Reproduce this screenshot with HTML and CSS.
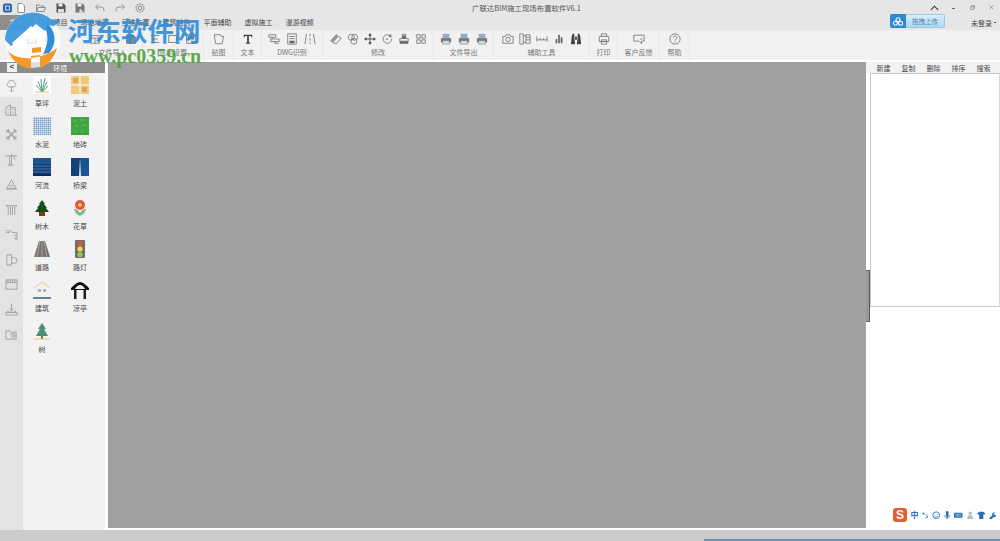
FILE: index.html
```html
<!DOCTYPE html>
<html lang="zh">
<head>
<meta charset="utf-8">
<title>广联达BIM施工现场布置软件V6.1</title>
<link rel="stylesheet" href="styles.css">
</head>
<body>
<div class="app">
  <header class="titlebar">
    <div class="toprow">
      <div class="quick">
        <svg class="q" viewBox="0 0 10 10"><rect x="0" y="0.5" width="9" height="9" rx="2" fill="#2b62a8"/><rect x="2.5" y="3" width="4" height="4" fill="none" stroke="#cfe0f5"/></svg>
        <svg class="q" viewBox="0 0 10 10"><path d="M2 .5h4l2.500 2.500v6.500h-6.500z" fill="#fff" stroke="#777" stroke-width=".8"/></svg>
        <svg class="q q-gap" viewBox="0 0 10 10"><path d="M.5 8.500v-6.500h3l1 1h3v1.500M.5 8.500l1.500-4h7.500l-1.500 4z" fill="none" stroke="#777" stroke-width=".8"/></svg>
        <svg class="q q-gap" viewBox="0 0 10 10"><path d="M.5.5h7l2 2v7h-9z" fill="#555"/><rect x="2.500" y=".5" width="4" height="3" fill="#eee"/><rect x="2" y="6" width="6" height="3.500" fill="#ddd"/></svg>
        <svg class="q q-gap" viewBox="0 0 10 10"><path d="M.5.5h7l2 2v7h-9z" fill="#777"/><rect x="2.500" y=".5" width="4" height="3" fill="#eee"/><path d="M4 9.500l1-4 4 4z" fill="#ddd"/></svg>
        <svg class="q q-gap" viewBox="0 0 10 10"><path d="M3.500 1l-3 3 3 3M1 4h5a3 3 0 0 1 3 3v1.500" fill="none" stroke="#999"/></svg>
        <svg class="q q-gap" viewBox="0 0 10 10"><path d="M6.500 1l3 3-3 3M9 4h-5a3 3 0 0 0-3 3v1.500" fill="none" stroke="#999"/></svg>
        <svg class="q q-gap" viewBox="0 0 10 10"><circle cx="5" cy="5" r="2" fill="none" stroke="#888"/><circle cx="5" cy="5" r="4" fill="none" stroke="#888" stroke-dasharray="1.600 .9" stroke-width="1.200"/></svg>
      </div>
      <div class="apptitle">广联达BIM施工现场布置软件V6.1</div>
      <div class="winctl">
        <svg class="caret" viewBox="0 0 10 6"><path d="M1 5l4-4 4 4" fill="none" stroke="#333" stroke-width="1.200"/></svg>
        <span class="min"></span>
        <svg class="res" viewBox="0 0 6 6"><path d="M.5 2h3.500v3.500h-3.500zM2 2v-1.500h3.500v3.500h-1.500" fill="none" stroke="#777" stroke-width=".7"/></svg>
        <svg class="cls" viewBox="0 0 6 6"><path d="M.8.8l4.400 4.400M5.200.8l-4.400 4.400" stroke="#777" stroke-width=".8"/></svg>
      </div>
    </div>
    <div class="tabrow">
      <span class="tab tab-file">文件</span>
      <nav class="tabs">
        <span class="tab">工程项目</span>
        <span class="tab">场地地形</span>
        <span class="tab">三维布置</span>
        <span class="tab">建筑结构</span>
        <span class="tab">平面辅助</span>
        <span class="tab">虚拟施工</span>
        <span class="tab">漫游视频</span>
      </nav>
      <div class="upload">
        <span class="up-ic"><svg viewBox="0 0 14 10"><circle cx="7" cy="3" r="2.300" fill="none" stroke="#fff" stroke-width="1.300"/><circle cx="4" cy="7" r="2.300" fill="none" stroke="#fff" stroke-width="1.300"/><circle cx="10" cy="7" r="2.300" fill="none" stroke="#fff" stroke-width="1.300"/></svg></span>
        <span class="up-tx">拖拽上传</span>
      </div>
      <span class="login">未登录 <i class="drop"></i></span>
    </div>
  </header>

  <section class="ribbon">
    <div class="grp w83">
      <div class="icons"><svg class="ri" viewBox="0 0 14 14"><path d="M2 12v-7l5-4 5 4v7z" class="ln"/></svg><svg class="ri" viewBox="0 0 14 14"><circle cx="7" cy="7" r="5" class="ln"/></svg></div>
      <div class="lbl">项目管理</div>
    </div>
    <div class="grp w60">
      <div class="icons">
        <svg class="ri" viewBox="0 0 14 14"><path d="M2 3h10v9h-10zM2 6h10M7 6v6" class="ln"/></svg>
        <svg class="ri" viewBox="0 0 14 14"><path d="M1 11l5-8 7 8z" class="ln"/></svg>
        <svg class="ri" viewBox="0 0 14 14"><path d="M2 2h7l3 3v7h-10z" class="fl"/></svg>
      </div>
      <div class="lbl">文件导入</div>
    </div>
    <div class="grp w61">
      <div class="icons">
        <svg class="ri" viewBox="0 0 14 14"><path d="M2 3h10M4 7h6M2 11h10" class="ln"/></svg>
        <svg class="ri" viewBox="0 0 14 14"><rect x="2" y="3" width="9" height="8" class="ln"/><path d="M11 6l2 1-2 1" class="ln"/></svg>
        <svg class="ri" viewBox="0 0 14 14"><rect x="2" y="2" width="10" height="10" class="ln"/><rect x="4" y="4" width="6" height="3" class="fl"/></svg>
      </div>
      <div class="lbl">显示设置</div>
    </div>
    <div class="grp w30">
      <div class="icons"><svg class="ri" viewBox="0 0 14 14"><path d="M1.500 2h7l1 2h3l-2 8.500h-7.500z" class="ln"/></svg></div>
      <div class="lbl">贴图</div>
    </div>
    <div class="grp w28">
      <div class="icons"><svg class="ri" viewBox="0 0 14 14"><path d="M2 2h10v3h-1l-.5-1.500h-2.500v7.500l1.500.5v1h-5v-1l1.500-.5v-7.500h-2.500l-.5 1.500h-1z" fill="#444"/></svg></div>
      <div class="lbl">文本</div>
    </div>
    <div class="grp w61">
      <div class="icons ic-wide">
        <svg class="ri" viewBox="0 0 14 14"><path d="M1 2h8v3h-8zM5 5v2M3 7h10v3h-10zM8 10v2h5" class="ln"/></svg>
        <svg class="ri" viewBox="0 0 14 14"><path d="M2 1h10v12h-10zM4 4h6M4 6.500h6" class="ln"/><rect x="4" y="9" width="6" height="3" fill="#666"/></svg>
        <svg class="ri" viewBox="0 0 14 14"><path d="M3 1l-2 12M7 1v3M7 6v3M7 11v2M11 1l2 12" class="ln"/></svg>
      </div>
      <div class="lbl">DWG识别</div>
    </div>
    <div class="grp w111">
      <div class="icons ic-mod">
        <svg class="ri" viewBox="0 0 14 14"><path d="M1 9l6-7 6 4-5 6h-4z" class="ln"/><path d="M1 9l6-7 3 2-6 7z" fill="#999"/></svg>
        <svg class="ri" viewBox="0 0 14 14"><circle cx="5" cy="5" r="3.500" class="ln"/><circle cx="9" cy="5" r="3.500" class="ln"/><circle cx="8" cy="9.500" r="3.500" class="ln"/></svg>
        <svg class="ri" viewBox="0 0 14 14"><path d="M7 1v12M1 7h12M5.500 3l1.500-2 1.500 2M5.500 11l1.500 2 1.500-2M3 5.500l-2 1.500 2 1.500M11 5.500l2 1.500-2 1.500" fill="none" stroke="#555" stroke-width="1.200"/></svg>
        <svg class="ri" viewBox="0 0 14 14"><path d="M11.500 4a5 5 0 1 0 1 3" class="ln"/><path d="M8.500 3.500l3.500-2v4z" fill="#666"/><circle cx="7" cy="7" r="1" fill="#666"/></svg>
        <svg class="ri" viewBox="0 0 14 14"><path d="M5 1.500h4v5h3v3h-10v-3h3z" class="ln"/><path d="M2 9.500h10v3h-10zM5 3h4v4h-4z" fill="#666"/></svg>
        <svg class="ri" viewBox="0 0 14 14"><path d="M2 2h4v4h-4zM8 2h4v4h-4zM2 8h4v4h-4zM8 8h4v4h-4z" class="ln"/></svg>
      </div>
      <div class="lbl">修改</div>
    </div>
    <div class="grp w60">
      <div class="icons ic-wide">
        <svg class="ri" viewBox="0 0 14 14"><path d="M3 1h8v5h-8z" class="bl"/><path d="M1 6h12v5h-12z" fill="#777"/><path d="M3 9h8v4h-8z" fill="#ddd" stroke="#777" stroke-width=".6"/></svg>
        <svg class="ri" viewBox="0 0 14 14"><path d="M3 1h8v5h-8z" class="bl"/><path d="M1 6h12v5h-12z" fill="#777"/><path d="M3 9h8v4h-8z" fill="#ddd" stroke="#777" stroke-width=".6"/></svg>
        <svg class="ri" viewBox="0 0 14 14"><path d="M3 1h8v5h-8z" class="bl"/><path d="M1 6h12v5h-12z" fill="#777"/><path d="M3 9h8v4h-8z" fill="#ddd" stroke="#777" stroke-width=".6"/></svg>
      </div>
      <div class="lbl">文件导出</div>
    </div>
    <div class="grp w96">
      <div class="icons ic-aux">
        <svg class="ri" viewBox="0 0 14 14"><path d="M1 4h3l1-2h4l1 2h3v8h-12z" class="ln"/><circle cx="7" cy="7.500" r="2.500" class="ln"/></svg>
        <svg class="ri" viewBox="0 0 14 14"><path d="M1 1h4v12h-4zM5 3h3M5 11h3M8 2h5v10h-5zM8 5h5M8 8h5" class="ln"/></svg>
        <svg class="ri" viewBox="0 0 14 14"><path d="M1 4v6M13 4v6M1 8h12M5 6v2M9 6v2" class="ln"/></svg>
        <svg class="ri" viewBox="0 0 14 14"><path d="M3 7h2v5h-2zM6 2h2v10h-2zM9 5h2v7h-2z" fill="#666"/></svg>
        <svg class="ri" viewBox="0 0 14 14"><path d="M2 4l1-3h2v3l1 9h-5zM12 4l-1-3h-2v3l-1 9h5zM6 4h2v4h-2z" fill="#444"/></svg>
      </div>
      <div class="lbl">辅助工具</div>
    </div>
    <div class="grp w28">
      <div class="icons"><svg class="ri" viewBox="0 0 14 14"><path d="M4 4v-3h6v3M1.500 4h11v6h-11zM4 8h6v5h-6z" class="ln"/><path d="M5 10h4" class="ln"/></svg></div>
      <div class="lbl">打印</div>
    </div>
    <div class="grp w42">
      <div class="icons"><svg class="ri" viewBox="0 0 14 14"><path d="M1 2.500h12v7h-3v3l-3-3h-6z" class="ln"/><path d="M8 7h3" class="ln"/></svg></div>
      <div class="lbl">客户反馈</div>
    </div>
    <div class="grp w30">
      <div class="icons"><svg class="ri" viewBox="0 0 14 14"><circle cx="7" cy="7" r="6" class="ln"/><path d="M5 5.500a2 2 0 1 1 3 1.700c-.8.500-1 .9-1 1.800M7 10v1.200" class="ln"/></svg></div>
      <div class="lbl">帮助</div>
    </div>
  </section>

  <main class="main">
    <aside class="left">
      <div class="lhead"><span class="back">&lt;</span><span class="lhead-t">环境</span></div>
      <div class="lbody">
        <div class="rail">
          <div class="rl on"><svg viewBox="0 0 14 14"><path d="M7 1.500c2.500 0 3 1.500 3 2.500 2 .5 2.500 4-.5 4.500h-5c-3-.5-2.500-4-.5-4.500 0-1 .5-2.500 3-2.500zM7 8.500v4.500M5 13h4M7 10l2-1.500" class="ln2"/></svg></div>
          <div class="rl"><svg viewBox="0 0 14 14"><path d="M1 13v-8l5-3v11M6 5h5v8M1 13h12M3 7h1M3 10h1M8 7h1M8 10h1" class="ln2"/></svg></div>
          <div class="rl"><svg viewBox="0 0 14 14"><path d="M2 2l10 10M12 2l-10 10" stroke="#aaa" stroke-width="1.600"/><path d="M1 4h3v-3M13 4h-3v-3M1 10h3v3M13 10h-3v3" class="ln2"/></svg></div>
          <div class="rl"><svg viewBox="0 0 14 14"><path d="M1 3h12M5 3v10M7 1v12M3 13h6M10 3v3l1 1" class="ln2"/></svg></div>
          <div class="rl"><svg viewBox="0 0 14 14"><path d="M7 2l5 9h-10zM1 12h12M5 8h4" class="ln2"/></svg></div>
          <div class="rl"><svg viewBox="0 0 14 14"><path d="M1 3h12M2 2v2M12 2v2M3.500 4v9M10.500 4v9M6 4v9M8 4v9" class="ln2"/></svg></div>
          <div class="rl"><svg viewBox="0 0 14 14"><path d="M1 3h5l2 2h5v3M1 5h4M10 8h3v4h-2v-2" class="ln2"/></svg></div>
          <div class="rl"><svg viewBox="0 0 14 14"><path d="M2 2h5v11h-5zM7 5h3a2.500 2.500 0 0 1 0 6h-3" class="ln2"/></svg></div>
          <div class="rl"><svg viewBox="0 0 14 14"><path d="M1 2h12v10h-12zM1 5h12M3 2v3M5.500 2v3M8 2v3M10.500 2v3" class="ln2"/></svg></div>
          <div class="rl"><svg viewBox="0 0 14 14"><path d="M7 1v7M5 6l2 2 2-2M3 8v2h8v-2M1 10h12v3h-12z" class="ln2"/></svg></div>
          <div class="rl"><svg viewBox="0 0 14 14"><path d="M1 3h4l1 1.500h6v7.500h-11zM9 7l2 3" class="ln2"/><circle cx="8.500" cy="8" r="2" class="ln2"/></svg></div>
        </div>
        <div class="items">
          <div class="item"><svg class="th" viewBox="0 0 18 18"><rect width="18" height="18" fill="#fff"/><path d="M9 16l-1-13M9 16l-4-11M9 16l-6-7M9 16l3-14M9 16l5-10M9 16l6-6" stroke="#5d9c83" fill="none"/><path d="M2 16h14" stroke="#d8c27a"/></svg><span>草坪</span></div>
          <div class="item"><svg class="th" viewBox="0 0 18 18"><rect width="18" height="18" fill="#f0ca7c"/><path d="M0 9h18M9 0v18" stroke="#fff"/><path d="M2 2h5v5h-5zM11 11h5v5h-5z" fill="#d9a85a"/></svg><span>泥土</span></div>
          <div class="item"><svg class="th" viewBox="0 0 18 18"><defs><pattern id="wat" width="2" height="2" patternUnits="userSpaceOnUse"><rect width="2" height="2" fill="#a8c2e2"/><rect width="1" height="1" fill="#dfe9f5"/><rect x="1" y="1" width="1" height="1" fill="#7d9fcc"/></pattern></defs><rect width="18" height="18" fill="url(#wat)"/></svg><span>水泥</span></div>
          <div class="item"><svg class="th" viewBox="0 0 18 18"><rect width="18" height="18" fill="#3fa541"/><path d="M2 4h3M9 3h4M4 9h3M11 8h4M2 14h4M10 14h3" stroke="#62bc5d"/></svg><span>地砖</span></div>
          <div class="item"><svg class="th" viewBox="0 0 18 18"><rect width="18" height="18" fill="#143e78"/><rect y="0" width="18" height="6" fill="#1c5590"/><path d="M0 8h18M0 11h18M0 14h18" stroke="#5a8cbc" stroke-width=".7"/><rect y="16" width="18" height="2" fill="#0c2c58"/></svg><span>河流</span></div>
          <div class="item"><svg class="th" viewBox="0 0 18 18"><rect width="18" height="18" fill="#1a558f"/><rect width="9" height="18" fill="#124277"/><path d="M9 0l1 18h-2z" fill="#dce8f2"/></svg><span>桥梁</span></div>
          <div class="item"><svg class="th" viewBox="0 0 18 18"><path d="M9 1l3 4h-1l3 4h-1l3 4h-14l3-4h-1l3-4h-1z" fill="#14501f"/><rect x="6" y="13" width="6" height="4" fill="#7a3b1d"/></svg><span>树木</span></div>
          <div class="item"><svg class="th" viewBox="0 0 18 18"><path d="M3 10c1 5 4 6 6 7 2-1 5-2 6-7-3 0-5 2-6 4-1-2-3-4-6-4z" fill="#86b98c"/><circle cx="9" cy="6" r="5" fill="#e2553f"/><circle cx="9" cy="6" r="2" fill="#f2c95c"/></svg><span>花草</span></div>
          <div class="item"><svg class="th" viewBox="0 0 18 18"><path d="M6 1h6l5 16h-16z" fill="#77736f"/><path d="M9 1v16M7 1l-3 16M11 1l3 16" stroke="#c8c8c8" stroke-width=".6"/></svg><span>道路</span></div>
          <div class="item"><svg class="th" viewBox="0 0 18 18"><rect x="4" y="0" width="10" height="18" rx="1" fill="#6f6f6a"/><circle cx="9" cy="3.500" r="2.600" fill="#e8564a"/><circle cx="9" cy="9" r="2.600" fill="#f3d74e"/><circle cx="9" cy="14.500" r="2.600" fill="#9ccc4e"/></svg><span>路灯</span></div>
          <div class="item"><svg class="th" viewBox="0 0 18 18"><path d="M1 7l8-6 8 6" fill="none" stroke="#f0c878"/><rect x="3" y="6" width="12" height="9" fill="#f4f2ee"/><rect x="5" y="8" width="3" height="3" fill="#a7b4c6"/><rect x="10" y="8" width="3" height="3" fill="#a7b4c6"/><path d="M0 17h18" stroke="#34587f" stroke-width="1.500"/></svg><span>建筑</span></div>
          <div class="item"><svg class="th" viewBox="0 0 18 18"><path d="M0 7c2-2 6-6 9-6s7 4 9 6v2h-18z" fill="#111"/><path d="M3 9h2.500v9h-2.500zM12.500 9h2.500v9h-2.500z" fill="#222"/><path d="M4 8c1-2 3-4 5-4s4 2 5 4z" fill="#f2f2f2"/></svg><span>凉亭</span></div>
          <div class="item"><svg class="th" viewBox="0 0 18 18"><path d="M9 1l4 6h-2l4 7h-12l4-7h-2z" fill="#4f8d78"/><rect x="8" y="14" width="2" height="3" fill="#7b6b4d"/><path d="M1 17h16" stroke="#e4c77a"/></svg><span>树</span></div>
        </div>
      </div>
    </aside>
    <div class="canvas"></div>
    <aside class="right">
      <div class="handle"></div>
      <div class="rcol">
        <div class="rtools"><span>新建</span><span>复制</span><span>删除</span><span>排序</span><span>搜索</span></div>
        <div class="rlist"></div>
        <div class="rprops"></div>
      </div>
    </aside>
  </main>
  <footer class="status"><div class="taskbar"></div></footer>

  <div class="ime">
    <span class="ime-s">S</span>
    <span class="ime-i">中</span>
    <svg viewBox="0 0 10 10"><circle cx="3" cy="3" r="1.200" fill="#2a6fb0"/><path d="M6 4l2 3-3 1" fill="none" stroke="#2a6fb0"/></svg>
    <svg viewBox="0 0 10 10"><circle cx="5" cy="5" r="4" fill="none" stroke="#2a6fb0"/><path d="M3.500 4v.5M6.500 4v.5M3 6c1 1.500 3 1.500 4 0" stroke="#2a6fb0" fill="none"/></svg>
    <svg viewBox="0 0 10 10"><rect x="3.500" y="0" width="3" height="7" rx="1.500" fill="#2a6fb0"/><path d="M2 5c0 4 6 4 6 0M5 8v2M3 10h4" fill="none" stroke="#2a6fb0"/></svg>
    <svg viewBox="0 0 10 10"><rect x="0" y="2" width="10" height="6" rx="1" fill="#2a6fb0"/><path d="M2 4h6M2 6h6" stroke="#fff" stroke-dasharray="1 .6"/></svg>
    <svg viewBox="0 0 10 10"><circle cx="5" cy="2.500" r="2" fill="#b4bdc6"/><path d="M1 10l2-5h4l2 5z" fill="#b4bdc6"/></svg>
    <svg viewBox="0 0 10 10"><path d="M0 2.500l3-1.500h4l3 1.500-1.500 2-1-.5v6h-5v-6l-1 .5z" fill="#2a6fb0"/></svg>
    <svg viewBox="0 0 10 10"><path d="M1 9l4-4c-.5-2 1-4 3.500-3.500l-1.500 1.500.5 1.500 1.500.5 1.500-1.500c.5 2.500-1.500 4-3.500 3.500l-4 3.500z" fill="#2a6fb0"/></svg>
  </div>

  <div class="mark" aria-hidden="true">
    <svg class="mark-logo" viewBox="0 0 66 62">
      <circle cx="33" cy="30" r="28" fill="#fff" fill-opacity=".72"/>
      <path d="M5 30a28 28 0 0 1 47-20l8 1-6 5-6-1-3 6-9-7-25 22z" fill="#2d8fd8" fill-opacity=".88"/>
      <path d="M12 33l19-17 14 11v10h-8v-8h-11v9h-8z" fill="#fff"/>
      <path d="M48 14c8 8 9 20 1 29l-6 1c5-9 6-18 2-26z" fill="#2d8fd8"/>
      <path d="M8 41c8 9 30 11 49-3-3 11-9 17-17 20v-13l-9 1v13c-11-2-19-8-23-18z" fill="#f39a2c"/>
      <path d="M32 38l9-1v5l-9 1z" fill="#f39a2c"/>
    </svg>
    <div class="mark-cn">河东软件网</div>
    <div class="mark-url">www.pc0359.cn</div>
  </div>
</div>
</body>
</html>
```
FILE: styles.css
```css
* { box-sizing: border-box; }
html, body { margin: 0; padding: 0; }
body { width: 1000px; height: 541px; overflow: hidden; background: #fff; font-family: "Noto Sans CJK SC", "Noto Sans", sans-serif; font-size: 7px; color: #444; }
svg { display: block; }
.app { position: relative; display: flex; flex-direction: column; height: 541px; overflow: hidden; }

.titlebar { height: 30px; background: #e6e6e6; display: flex; flex-direction: column; }
.toprow { height: 15px; display: flex; align-items: center; }
.quick { width: 472px; display: flex; align-items: center; padding-left: 3px; gap: 3px; }
.q { width: 10px; height: 10px; flex: none; }
.q-gap { margin-left: 6.750px; }
.apptitle { width: 108px; text-align: center; font-size: 7.400px; white-space: nowrap; color: #555; }
.winctl { margin-left: auto; display: flex; align-items: center; height: 15px; padding-right: 6px; }
.caret { width: 9px; height: 6px; margin-right: 13px; }
.min { width: 3px; height: 1px; background: #666; margin-right: 15px; margin-top: 2px; }
.res { width: 5px; height: 5px; margin-right: 14px; }
.cls { width: 5px; height: 5px; }

.tabrow { height: 15px; display: flex; align-items: center; }
.tab { width: 41px; text-align: center; line-height: 15px; color: #444; white-space: nowrap; }
.tab-file { width: 33px; background: #8d8d8d; color: #fff; }
.tabs { display: flex; }
.upload { margin-left: auto; margin-top: -3px; display: flex; width: 55px; height: 14px; border-radius: 2px; overflow: hidden; }
.up-ic { width: 16px; background: #2b8ad0; display: flex; align-items: center; justify-content: center; }
.up-ic svg { width: 12px; height: 9px; }
.up-tx { flex: 1; background: linear-gradient(#d8eefb, #a9d7f3); color: #4f86ad; text-align: center; line-height: 12px; font-size: 6.500px; border: 1px solid #9ccbe8; border-left: 0; }
.login { width: 55px; padding-left: 26px; color: #444; white-space: nowrap; font-size: 7px; display: flex; align-items: center; gap: 2px; }
.drop { width: 2px; height: 1px; background: #555; }

.ribbon { height: 32px; display: flex; background: #f1f1f1; border-bottom: 2px solid #fff; }
.grp { display: flex; flex-direction: column; align-items: center; border-right: 1px solid #e6e6e6; flex: none; }
.w83 { width: 83px; } .w60 { width: 60px; } .w61 { width: 61px; } .w30 { width: 30px; } .w28 { width: 28px; } .w111 { width: 111px; } .w96 { width: 96px; } .w42 { width: 42px; }
.grp:first-child .lbl { visibility: hidden; }
.icons { height: 16px; padding-top: 2px; display: flex; gap: 6px; align-items: center; }
.ic-wide { gap: 6px; }
.ic-mod { gap: 5px; }
.ic-aux { gap: 5px; }
.ri { width: 12px; height: 12px; flex: none; }
.lbl { line-height: 13px; color: #777; font-size: 7px; white-space: nowrap; }
.ln { fill: none; stroke: #777; stroke-width: 1; }
.fl { fill: #888; stroke: #666; }
.bl { fill: #8fabc8; }
.ln2 { fill: none; stroke: #999; stroke-width: .9; }

.main { flex: 1; display: flex; min-height: 0; }
.left { width: 108px; flex: none; display: flex; flex-direction: column; border-right: 3px solid #fff; }
.lhead { height: 11px; background: #8c8c8c; display: flex; align-items: center; color: #fff; }
.back { width: 10px; height: 9px; margin-left: 7px; background: #f0f0f0; color: #444; text-align: center; line-height: 8px; font-family: "Liberation Sans", sans-serif; font-size: 8px; font-weight: bold; }
.lhead-t { width: 92px; text-align: center; margin-left: -1px; }
.lbody { flex: 1; display: flex; min-height: 0; }
.rail { width: 23px; flex: none; background: #e3e3e3; display: flex; flex-direction: column; }
.rl { height: 25px; display: flex; align-items: center; justify-content: center; }
.rl.on { background: #f2f2f2; height: 24px; }
.rl svg { width: 13px; height: 13px; }
.items { flex: 1; background: #f2f2f2; display: grid; grid-template-columns: 38px 38px; grid-auto-rows: 41px; padding-top: 3px; justify-content: start; align-content: start; }
.item { display: flex; flex-direction: column; align-items: center; color: #444; }
.item span { line-height: 11px; margin-top: 4px; white-space: nowrap; }
.th { width: 18px; height: 18px; flex: none; }

.canvas { width: 758px; flex: none; background: #a0a0a0; margin-bottom: 2px; }
.right { flex: 1; display: flex; min-width: 0; background: #fff; }
.handle { width: 4px; height: 52px; margin-top: 208px; background: #9a9a9a; border-right: 1px solid #555; border-top: 1px solid #666; border-bottom: 1px solid #666; flex: none; }
.rcol { flex: 1; display: flex; flex-direction: column; min-width: 0; }
.rtools { height: 11px; display: flex; align-items: center; padding-left: 5px; background: #f2f2f2; margin-left: -4px; color: #444; white-space: nowrap; }
.rtools span { width: 25px; text-align: center; flex: none; }
.rlist { height: 234px; background: #fff; border: 1px solid #c8c8c8; border-right-color: #d8d8d8; }
.rprops { flex: 1; background: #fff; }

.status { height: 11px; flex: none; background: #cccccc; display: flex; justify-content: flex-end; align-items: flex-end; }
.taskbar { width: 296px; height: 2px; background: #6f8fb5; }

.ime { position: absolute; left: 893px; top: 508px; display: flex; align-items: center; gap: 2.600px; height: 14px; }
.ime svg { width: 8.500px; height: 8.500px; flex: none; }
.ime-s { width: 14px; height: 14px; background: #e4602f; color: #fff; border-radius: 3px; font: bold 12px/14px "Liberation Sans", sans-serif; text-align: center; margin-right: 1px; }
.ime-i { color: #2a6fb0; font-size: 8px; font-weight: 700; line-height: 10px; }

.mark { position: absolute; left: 0; top: 0; width: 205px; height: 72px; pointer-events: none; }
.mark-logo { position: absolute; left: 0; top: 10px; width: 66px; height: 62px; }
.mark-cn { position: absolute; left: 68px; top: 12px; font-size: 26.500px; line-height: 36px; font-weight: 700; color: #2f8ed8; opacity: .9; white-space: nowrap; }
.mark-url { position: absolute; left: 69px; top: 45px; font-family: "Liberation Serif", serif; font-size: 20px; line-height: 22px; font-weight: 700; color: #4fa23c; opacity: .9; white-space: nowrap; }
```
